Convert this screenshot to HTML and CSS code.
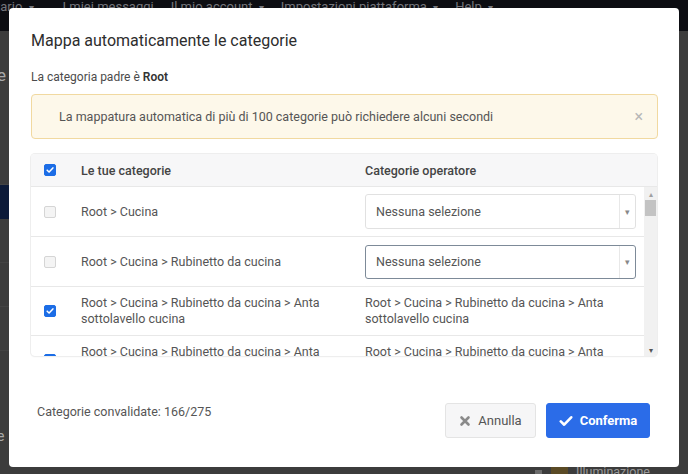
FILE: index.html
```html
<!DOCTYPE html>
<html lang="it">
<head>
<meta charset="utf-8">
<title>Mappa automaticamente le categorie</title>
<link rel="stylesheet" href="styles.css">
</head>
<body>
<div class="page">
  <nav class="topnav">
    <span class="nav-item nav-first">tario <span class="caret">▾</span></span>
    <span class="nav-item">I miei messaggi</span>
    <span class="nav-item">Il mio account <span class="caret">▾</span></span>
    <span class="nav-item">Impostazioni piattaforma <span class="caret">▾</span></span>
    <span class="nav-item">Help <span class="caret">▾</span></span>
  </nav>
  <div class="main">
    <aside class="side">
      <div class="side-letter">e</div>
      <div class="side-row side-row-tall"></div>
      <div class="side-active"></div>
      <div class="side-row"></div>
      <div class="side-row"></div>
      <div class="side-row"></div>
      <div class="side-letter side-letter-bottom">e</div>
    </aside>
    <div class="content">
      <div class="bg-item"><span class="bg-icon"></span><span class="bg-thumb"></span><span class="bg-label">Illuminazione</span></div>
    </div>
  </div>
</div>

<div class="modal">
  <h1 class="modal-title">Mappa automaticamente le categorie</h1>
  <p class="parent">La categoria padre è <strong>Root</strong></p>
  <div class="alert">
    <span>La mappatura automatica di più di 100 categorie può richiedere alcuni secondi</span>
    <span class="alert-close">×</span>
  </div>

  <div class="table">
    <div class="thead">
      <div class="cell-check"><span class="cb cb-on"><svg viewBox="0 0 12 12"><path d="M2.6 6.2l2.3 2.3 4.6-5" fill="none" stroke="#fff" stroke-width="1.8" stroke-linecap="round" stroke-linejoin="round"/></svg></span></div>
      <div class="th">Le tue categorie</div>
      <div class="th">Categorie operatore</div>
    </div>
    <div class="tbody">
      <div class="rows">
        <div class="row">
          <div class="cell-check"><span class="cb"></span></div>
          <div class="td">Root &gt; Cucina</div>
          <div class="td td-select"><div class="select"><span class="select-text">Nessuna selezione</span><span class="select-arrow">▾</span></div></div>
        </div>
        <div class="row">
          <div class="cell-check"><span class="cb"></span></div>
          <div class="td">Root &gt; Cucina &gt; Rubinetto da cucina</div>
          <div class="td td-select"><div class="select select-focus"><span class="select-text">Nessuna selezione</span><span class="select-arrow">▾</span></div></div>
        </div>
        <div class="row row-text">
          <div class="cell-check"><span class="cb cb-on"><svg viewBox="0 0 12 12"><path d="M2.6 6.2l2.3 2.3 4.6-5" fill="none" stroke="#fff" stroke-width="1.8" stroke-linecap="round" stroke-linejoin="round"/></svg></span></div>
          <div class="td">Root &gt; Cucina &gt; Rubinetto da cucina &gt; Anta sottolavello cucina</div>
          <div class="td">Root &gt; Cucina &gt; Rubinetto da cucina &gt; Anta sottolavello cucina</div>
        </div>
        <div class="row row-text">
          <div class="cell-check"><span class="cb cb-on"><svg viewBox="0 0 12 12"><path d="M2.6 6.2l2.3 2.3 4.6-5" fill="none" stroke="#fff" stroke-width="1.8" stroke-linecap="round" stroke-linejoin="round"/></svg></span></div>
          <div class="td">Root &gt; Cucina &gt; Rubinetto da cucina &gt; Anta sottolavello cucina</div>
          <div class="td">Root &gt; Cucina &gt; Rubinetto da cucina &gt; Anta sottolavello cucina</div>
        </div>
      </div>
      <div class="scrollbar">
        <span class="sb-arrow">▴</span>
        <span class="sb-thumb"></span>
        <span class="sb-fill"></span>
        <span class="sb-arrow">▾</span>
      </div>
    </div>
  </div>

  <div class="footer">
    <span class="count">Categorie convalidate: 166/275</span>
    <div class="actions">
      <button class="btn btn-cancel"><svg class="btn-icon" viewBox="0 0 12 12"><path d="M2.5 2.5l7 7M9.5 2.5l-7 7" stroke="#8a8a8a" stroke-width="2.6" stroke-linecap="round"/></svg>Annulla</button>
      <button class="btn btn-ok"><svg class="btn-icon" viewBox="0 0 14 12"><path d="M1.8 6.4l3.4 3.3 7-7.4" fill="none" stroke="#fff" stroke-width="2.6" stroke-linecap="round" stroke-linejoin="round"/></svg>Conferma</button>
    </div>
  </div>
</div>
</body>
</html>
```

FILE: styles.css
```css
* { box-sizing: border-box; }

html, body {
  margin: 0;
  padding: 0;
  width: 688px;
  height: 474px;
  overflow: hidden;
  font-family: Roboto, "Liberation Sans", Arial, sans-serif;
  background: #3c3c3c;
}

.page {
  width: 688px;
  height: 474px;
  display: flex;
  flex-direction: column;
}

.topnav {
  height: 31px;
  background: #0c0d12;
  display: flex;
  gap: 17px;
  margin-left: -4px;
  color: #75767c;
  font-size: 13px;
  line-height: 14px;
}

.nav-item { white-space: nowrap; }
.nav-first { margin-right: 12px; }
.caret { font-size: 10px; margin-left: 3px; }

.main {
  flex: 1;
  display: flex;
}

.side {
  width: 9px;
  overflow: hidden;
  display: flex;
  flex-direction: column;
  padding-top: 34px;
}

.side-letter {
  color: #a9a9a9;
  font-size: 17px;
  line-height: 20px;
  margin-left: -3px;
}

.side-row {
  height: 44px;
  border-bottom: 1px solid #444;
}

.side-row-tall { height: 100px; }

.side-active {
  height: 34px;
  background: #0c1a38;
}

.side-letter-bottom { margin-top: auto; margin-bottom: 28px; font-size: 14px; }

.content {
  flex: 1;
  display: flex;
  align-items: flex-end;
  justify-content: flex-end;
  padding-right: 38px;
}

.bg-item {
  display: flex;
  align-items: flex-end;
  height: 14px;
  margin-bottom: -6px;
}

.bg-icon { width: 7px; height: 6px; background: #6b6b6b; margin-right: 9px; margin-bottom: 4px; }
.bg-thumb { width: 17px; height: 14px; background: #5a4a25; margin-right: 8px; }
.bg-label { color: #9a9a9a; font-size: 12.5px; line-height: 16px; }

/* Modal */
.modal {
  position: absolute;
  left: 9px;
  top: 8px;
  width: 670px;
  height: 459px;
  background: #fff;
  border-radius: 4px;
  padding: 21px 21px 0 22px;
  display: flex;
  flex-direction: column;
}

.modal-title {
  margin: 0;
  font-size: 16px;
  line-height: 24px;
  font-weight: 400;
  color: #2d2d2d;
}

.parent {
  margin: 15px 0 0;
  font-size: 12px;
  line-height: 18px;
  color: #4b4b4b;
}

.parent strong { font-weight: 600; color: #333; }

.alert {
  margin-top: 8px;
  height: 45px;
  border: 1px solid #f1d9a0;
  background: #fdf8ea;
  border-radius: 4px;
  display: flex;
  align-items: center;
  justify-content: space-between;
  padding: 0 14px 0 27px;
  font-size: 12.5px;
  color: #555;
}

.alert-close { color: #b7b7b7; font-size: 16px; line-height: 16px; }

/* Table */
.table {
  margin-top: 15px;
  width: 626px;
  border-radius: 4px;
  box-shadow: 0 0 0 1px #eeeeee, 0 1px 2px rgba(0,0,0,0.06);
  overflow: hidden;
}

.thead {
  height: 33px;
  background: #f7f7f8;
  border-bottom: 1px solid #e8e8e8;
  display: grid;
  grid-template-columns: 50px 284px 1fr;
  align-items: center;
}

.th {
  font-size: 12.5px;
  font-weight: 500;
  color: #444;
}

.cell-check {
  padding-left: 13px;
  display: flex;
  align-items: center;
}

.cb {
  width: 12px;
  height: 12px;
  border-radius: 2px;
  border: 1px solid #d5d5d5;
  background: #f4f4f4;
  display: block;
}

.cb svg { display: block; width: 10px; height: 10px; }

.cb-on {
  background: #1c6de6;
  border-color: #1c6de6;
}

.tbody {
  height: 169px;
  display: flex;
}

.rows {
  width: 613px;
  overflow: hidden;
}

.row {
  display: grid;
  grid-template-columns: 50px 284px 1fr;
  align-items: center;
  border-bottom: 1px solid #e8e8e8;
  height: 50px;
}

.row-text {
  height: auto;
  padding: 8px 0;
}

.td {
  font-size: 12.5px;
  line-height: 16px;
  color: #555;
  padding-right: 18px;
}

.td-select { padding-right: 8px; }

.select {
  height: 35px;
  border: 1px solid #e1e1e1;
  border-radius: 3px;
  display: flex;
  align-items: center;
  justify-content: space-between;
  padding-left: 10px;
}

.select-focus {
  height: 34px;
  border-color: #7d8a98;
}

.select-text { color: #555; font-size: 12.5px; }

.select-arrow {
  width: 16px;
  height: 100%;
  border-left: 1px solid #e8e8e8;
  color: #888;
  font-size: 9px;
  display: flex;
  align-items: center;
  justify-content: center;
}

.scrollbar {
  width: 13px;
  background: #f1f1f1;
  display: flex;
  flex-direction: column;
  align-items: center;
}

.sb-arrow {
  font-size: 8px;
  line-height: 12px;
  height: 13px;
  color: #a0a0a0;
  padding-top: 2px;
}

.sb-arrow:last-child { color: #555; }

.sb-thumb {
  width: 11px;
  height: 16px;
  background: #c3c3c3;
}

.sb-fill { flex: 1; }

/* Footer */
.footer {
  flex: 1;
  display: flex;
  align-items: center;
  justify-content: space-between;
  padding: 0 8px 0 6px;
}

.count {
  font-size: 12.5px;
  color: #555;
}

.actions {
  display: flex;
  gap: 10px;
  margin-top: 18px;
}

.btn {
  height: 35px;
  border-radius: 3px;
  font-family: inherit;
  font-size: 13px;
  display: flex;
  align-items: center;
  gap: 7px;
  justify-content: center;
  cursor: pointer;
}

.btn-icon { width: 12px; height: 12px; display: block; }

.btn-cancel {
  width: 91px;
  background: #f6f6f7;
  border: 1px solid #e4e4e4;
  color: #555;
}

.btn-ok {
  width: 104px;
  background: #2b6ce8;
  border: 1px solid #2b6ce8;
  color: #fff;
  font-weight: 700;
}

.btn-ok .btn-icon { width: 14px; }
```
